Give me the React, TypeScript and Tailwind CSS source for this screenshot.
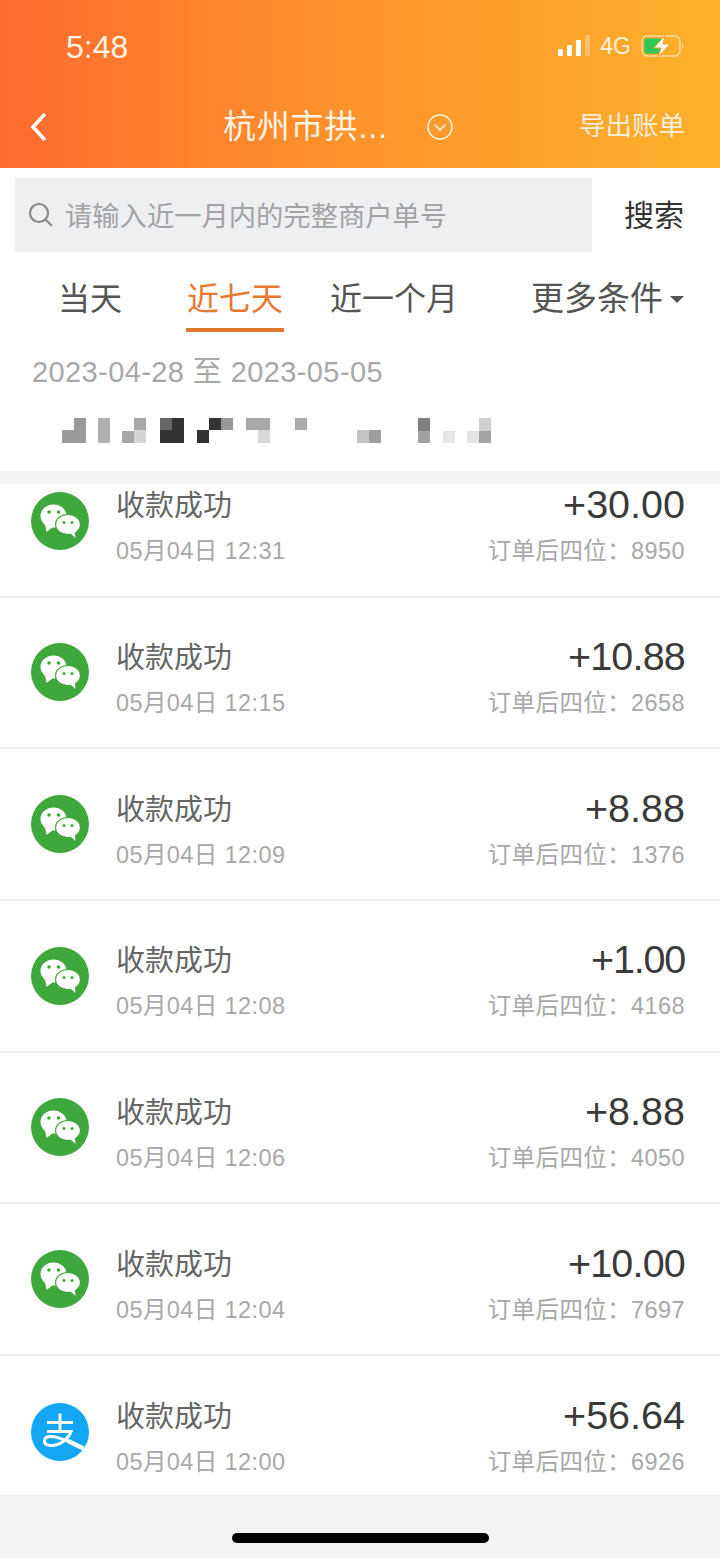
const font = { fontFamily: '"Liberation Sans", "Noto Sans CJK SC", sans-serif' };

const rows = [
  { time: '05月04日 12:31', amount: '+30.00', tail: '8950', pay: 'wx', amountCls: '' },
  { time: '05月04日 12:15', amount: '+10.88', tail: '2658', pay: 'wx', amountCls: 'tracking-[-0.8px]' },
  { time: '05月04日 12:09', amount: '+8.88', tail: '1376', pay: 'wx', amountCls: '' },
  { time: '05月04日 12:08', amount: '+1.00', tail: '4168', pay: 'wx', amountCls: 'tracking-[-1.2px]' },
  { time: '05月04日 12:06', amount: '+8.88', tail: '4050', pay: 'wx', amountCls: '' },
  { time: '05月04日 12:04', amount: '+10.00', tail: '7697', pay: 'wx', amountCls: 'tracking-[-0.8px]' },
  { time: '05月04日 12:00', amount: '+56.64', tail: '6926', pay: 'ali', amountCls: '' },
];

// mosaic blocks over the blurred merchant name: x, y, w, h, colour
const mosaic = [
  [74, 0, 12, 12, '#9a9a9a'], [62, 12, 24, 13, '#9a9a9a'],
  [98, 0, 12, 25, '#b0b0b0'], [122, 13, 12, 12, '#a8a8a8'], [134, 0, 12, 12, '#a8a8a8'], [134, 12, 12, 13, '#d4d4d4'],
  [160, 0, 12, 12, '#666666'], [172, 0, 12, 12, '#333333'], [160, 12, 24, 13, '#333333'],
  [209, 0, 12, 12, '#333333'], [221, 0, 12, 12, '#999999'], [197, 12, 12, 13, '#333333'],
  [246, 0, 24, 12, '#a8a8a8'], [258, 12, 12, 13, '#d8d8d8'],
  [295, 0, 12, 12, '#aaaaaa'],
  [357, 12, 12, 13, '#c4c4c4'], [369, 12, 12, 13, '#9e9e9e'],
  [418, 0, 12, 13, '#808080'], [418, 13, 12, 12, '#a0a0a0'],
  [443, 13, 12, 12, '#e6e6e6'],
  [467, 13, 12, 12, '#e4e4e4'], [479, 0, 12, 13, '#d0d0d0'], [479, 13, 12, 12, '#a4a4a4'],
];

const WechatIcon = () => (
  <svg width="58" height="58" viewBox="0 0 58 58" className="shrink-0">
    <circle cx="29" cy="29" r="29" fill="#3fa83d" />
    <ellipse cx="22.5" cy="24" rx="13" ry="11.5" fill="#fff" />
    <path d="M14 32 L15.5 40 L22 35 Z" fill="#fff" />
    <circle cx="18" cy="20" r="1.8" fill="#3fa83d" />
    <circle cx="27.5" cy="20" r="1.8" fill="#3fa83d" />
    <ellipse cx="37" cy="32.5" rx="13" ry="10.5" fill="#3fa83d" />
    <ellipse cx="37" cy="32.5" rx="11.8" ry="9.5" fill="#fff" />
    <path d="M39 41 L44.5 46 L43.5 38 Z" fill="#fff" />
    <circle cx="33" cy="30.5" r="1.5" fill="#3fa83d" />
    <circle cx="41" cy="30.5" r="1.5" fill="#3fa83d" />
  </svg>
);

const AlipayIcon = () => (
  <svg width="58" height="58" viewBox="0 0 58 58" className="shrink-0">
    <circle cx="29" cy="29" r="29" fill="#12a6f4" />
    <g fill="none" stroke="#fff" strokeWidth="3">
      <path d="M16 19.5 H42" />
      <path d="M29 10.5 V28" />
      <path d="M16 28.5 H40 C37 37 27 43.5 19 42.5 C11 41.5 12 33.5 19.5 33.5 C26 33.5 32 36 39 39" />
      <path d="M37 38 L52.5 45.5" strokeWidth="4.5" />
    </g>
  </svg>
);

const App = () => {
  return (
    <div className="w-[720px] h-[1558px] bg-[#f3f3f3] flex flex-col overflow-hidden" style={font}>
      <div className="h-[168px] shrink-0 flex flex-col bg-gradient-to-r from-[#ff6a2e] via-[#fd942b] to-[#feb02c] text-white">
        <div className="h-[92px] flex items-center justify-between pl-[66px] pr-[35px]">
          <span className="text-[32px] font-medium text-[#fdf3e6] pt-[1px]">5:48</span>
          <div className="flex items-center gap-[10px]">
            <svg width="32" height="22" viewBox="0 0 32 22">
              <rect x="0" y="14" width="5" height="7" rx="1" fill="#fff" />
              <rect x="9" y="10" width="5" height="11" rx="1" fill="#fff" />
              <rect x="18" y="5" width="5" height="16" rx="1" fill="#fff" />
              <rect x="27" y="0" width="5" height="21" rx="1" fill="#fff" opacity="0.3" />
            </svg>
            <span className="text-[23px] text-[#fdf1df]">4G</span>
            <svg width="44" height="24" viewBox="0 0 44 24">
              <rect x="1" y="2" width="38" height="20" rx="5" fill="none" stroke="#fff" strokeOpacity="0.55" strokeWidth="1.5" />
              <rect x="3.5" y="4.5" width="18" height="15" rx="2" fill="#2ec85a" />
              <path d="M41 9 C43 10 43 14 41 15 Z" fill="#fff" opacity="0.5" />
              <path d="M24 1 L13 14 H20 L17 23 L29 10 H22 Z" fill="#fff" stroke="#fd9f2b" strokeWidth="1" />
            </svg>
          </div>
        </div>
        <div className="flex-1 flex items-center justify-between pl-[28px] pr-[35px] pb-[6px]">
          <svg width="22" height="32" viewBox="0 0 22 32" fill="none" stroke="#fff" strokeWidth="3.6">
            <path d="M17 3 L5 16 L17 29" />
          </svg>
          <div className="flex items-center ml-[48px]">
            <span className="text-[33px] text-[#fff3e4] tracking-[0.8px]">杭州市拱...</span>
            <svg width="28" height="28" viewBox="0 0 28 28" fill="none" stroke="#fff3e4" strokeWidth="1.6" className="ml-[38px]">
              <circle cx="14" cy="14" r="12" />
              <path d="M8.5 11.5 L14 17 L19.5 11.5" />
            </svg>
          </div>
          <span className="text-[26.5px] text-[#fdeeda]">导出账单</span>
        </div>
      </div>

      <div className="h-[303px] shrink-0 bg-white flex flex-col">
        <div className="flex items-center pt-[10px] pl-[15px]">
          <div className="w-[577px] h-[74px] bg-[#eeeff1] flex items-center pl-[13px]">
            <svg width="26" height="26" viewBox="0 0 26 26" fill="none" stroke="#8a8a8a" strokeWidth="2.2">
              <circle cx="11" cy="11" r="9" />
              <path d="M17.5 17.5 L24 24" />
            </svg>
            <span className="ml-[11px] mt-[4px] text-[27.3px] text-[#a3a3a5]">请输入近一月内的完整商户单号</span>
          </div>
          <span className="ml-[32px] mt-[1px] text-[30px] text-[#333333]">搜索</span>
        </div>

        <div className="flex items-center h-[78px] mt-[8px] text-[32px] text-[#555555]">
          <span className="ml-[58px]">当天</span>
          <div className="relative ml-[64px] w-[98px] text-[#e8772f] flex justify-center">
            <span className="whitespace-nowrap">近七天</span>
            <div className="absolute left-0 right-0 top-[53px] h-[4px] bg-[#e0762f]" />
          </div>
          <span className="ml-[46px]">近一个月</span>
          <span className="ml-[73px] text-[33px]">更多条件</span>
          <div className="ml-[7px] w-0 h-0 border-x-[7px] border-x-transparent border-t-[7px] border-t-[#555555]" />
        </div>

        <div className="mt-[15px] pl-[32px] text-[29px] text-[#a8a8a8] tracking-[0.4px] h-[40px] flex items-center">2023-04-28 至 2023-05-05</div>

        <svg width="720" height="25" viewBox="0 0 720 25" className="mt-[25px] shrink-0">
          {mosaic.map(([x, y, w, h, c], i) => (
            <rect key={i} x={x} y={y} width={w} height={h} fill={c as string} />
          ))}
        </svg>
      </div>

      <div className="h-[13px] shrink-0 bg-[#f4f4f4]" />

      <div className="h-[1011px] shrink-0 overflow-hidden">
        <div className="-mt-[38px]">
          {rows.map((r, i) => (
            <div
              key={i}
              className={`h-[151.67px] bg-white flex items-center pl-[31px] pr-[35px] ${i < rows.length - 1 ? 'border-b-2 border-[#f0f0f0]' : ''}`}
            >
              {r.pay === 'wx' ? <WechatIcon /> : <AlipayIcon />}
              <div className="ml-[27px] pt-[12px] flex flex-col">
                <span className="text-[29px] leading-[40px] text-[#666666]">收款成功</span>
                <span className="mt-[9px] text-[23.5px] leading-[32px] text-[#a8a8a8] tracking-[0.4px]">{r.time}</span>
              </div>
              <div className="ml-auto pt-[12px] flex flex-col items-end">
                <span className={`text-[39.5px] leading-[36px] text-[#3a3a3a] ${r.amountCls}`}>{r.amount}</span>
                <span className="mt-[13px] text-[23.5px] leading-[32px] text-[#a8a8a8] tracking-[0.4px]">订单后四位：{r.tail}</span>
              </div>
            </div>
          ))}
        </div>
      </div>

      <div className="flex-1 flex justify-center pt-[38px]">
        <div className="w-[257px] h-[10px] rounded-full bg-black" />
      </div>
    </div>
  );
};

export default App;
